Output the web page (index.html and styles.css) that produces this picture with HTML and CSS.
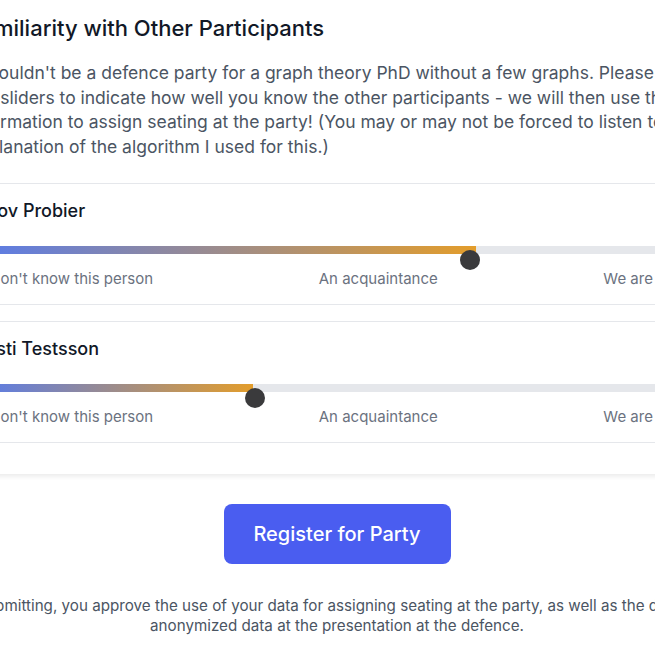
FILE: index.html
```html
<!DOCTYPE html>
<html lang="en">
<head>
    <meta charset="UTF-8">
    <meta name="viewport" content="width=device-width, initial-scale=1.0">
    <title>Defence Party Registration</title>
    <link rel="stylesheet" href="styles.css">
</head>
<body>

<div class="page">
    <h1>Familiarity with Other Participants</h1>
    <p class="intro">
        It wouldn't be a defence party for a graph theory PhD without a few graphs. Please use the sliders to indicate how well you know the other participants - we will then use this information to assign seating at the party! (You may or may not be forced to listen to an explanation of the algorithm I used for this.)
    </p>

    <div class="participants">
        <div class="participant">
            <div class="participant-name">Jakov Probier</div>
            <div class="slider">
                <div class="slider-fill" style="width: 64.3%"></div>
                <div class="slider-thumb" style="left: 63.6%"></div>
            </div>
            <div class="slider-labels">
                <span>I don't know this person</span>
                <span>An acquaintance</span>
                <span>We are close friends</span>
            </div>
        </div>

        <div class="participant">
            <div class="participant-name">Kersti Testsson</div>
            <div class="slider">
                <div class="slider-fill" style="width: 35.2%"></div>
                <div class="slider-thumb" style="left: 35.5%"></div>
            </div>
            <div class="slider-labels">
                <span>I don't know this person</span>
                <span>An acquaintance</span>
                <span>We are close friends</span>
            </div>
        </div>
    </div>

    <div class="actions">
        <button class="submit-button">Register for Party</button>
        <p class="notice">
            By submitting, you approve the use of your data for assigning seating at the party, as well as the display of anonymized data at the presentation at the defence.
        </p>
    </div>
</div>

</body>
</html>
```

FILE: styles.css
```css
html, body {
    overflow: hidden;
}

body {
    background-color: #ffffff;
    color: #111827;
    font-family: 'Inter', 'Noto Sans', sans-serif;
    margin: 0;
    padding: 0;
}

.page {
    width: 736px;
    margin-left: -31px;
}

.page h1 {
    font-size: 22px;
    line-height: 30px;
    font-weight: 500;
    margin: 13px 0 0;
    color: #111827;
}

.intro {
    font-size: 17.5px;
    line-height: 24.65px;
    color: #4b5563;
    margin: 18px 0 0;
}

.participants {
    margin: 23px -44px 0 -2px;
    padding-bottom: 31px;
    display: flex;
    flex-direction: column;
    gap: 16px;
    box-shadow: 0 3px 4px rgba(0, 0, 0, 0.07);
}

.participant {
    border-top: 1px solid #e5e7eb;
    border-bottom: 1px solid #e5e7eb;
    padding: 15px 0 14px;
}

.participant-name {
    font-size: 18px;
    line-height: 24px;
    font-weight: 500;
    color: #111827;
}

.slider {
    position: relative;
    height: 8px;
    margin: 23px 0 0 16px;
    background-color: #e5e7eb;
}

.slider-fill {
    height: 100%;
    background: linear-gradient(to right, #5b7ce6, #e39d2b);
}

.slider-thumb {
    position: absolute;
    top: 4px;
    width: 20px;
    height: 20px;
    margin-left: -10px;
    border-radius: 50%;
    background-color: #3a3a3c;
}

.slider-labels {
    display: flex;
    justify-content: space-between;
    margin: 14px 0 0 16px;
    font-size: 15px;
    line-height: 22px;
    color: #6b7280;
}

.actions {
    display: flex;
    flex-direction: column;
    align-items: center;
    margin-top: 30px;
}

.submit-button {
    background-color: #4a5df0;
    color: #ffffff;
    border: none;
    width: 227px;
    height: 60px;
    font-family: inherit;
    font-size: 20px;
    font-weight: 500;
    border-radius: 8px;
    cursor: pointer;
}

.notice {
    margin: 32px -40px 0;
    font-size: 15.2px;
    line-height: 20px;
    color: #4b5563;
    text-align: center;
}
```
